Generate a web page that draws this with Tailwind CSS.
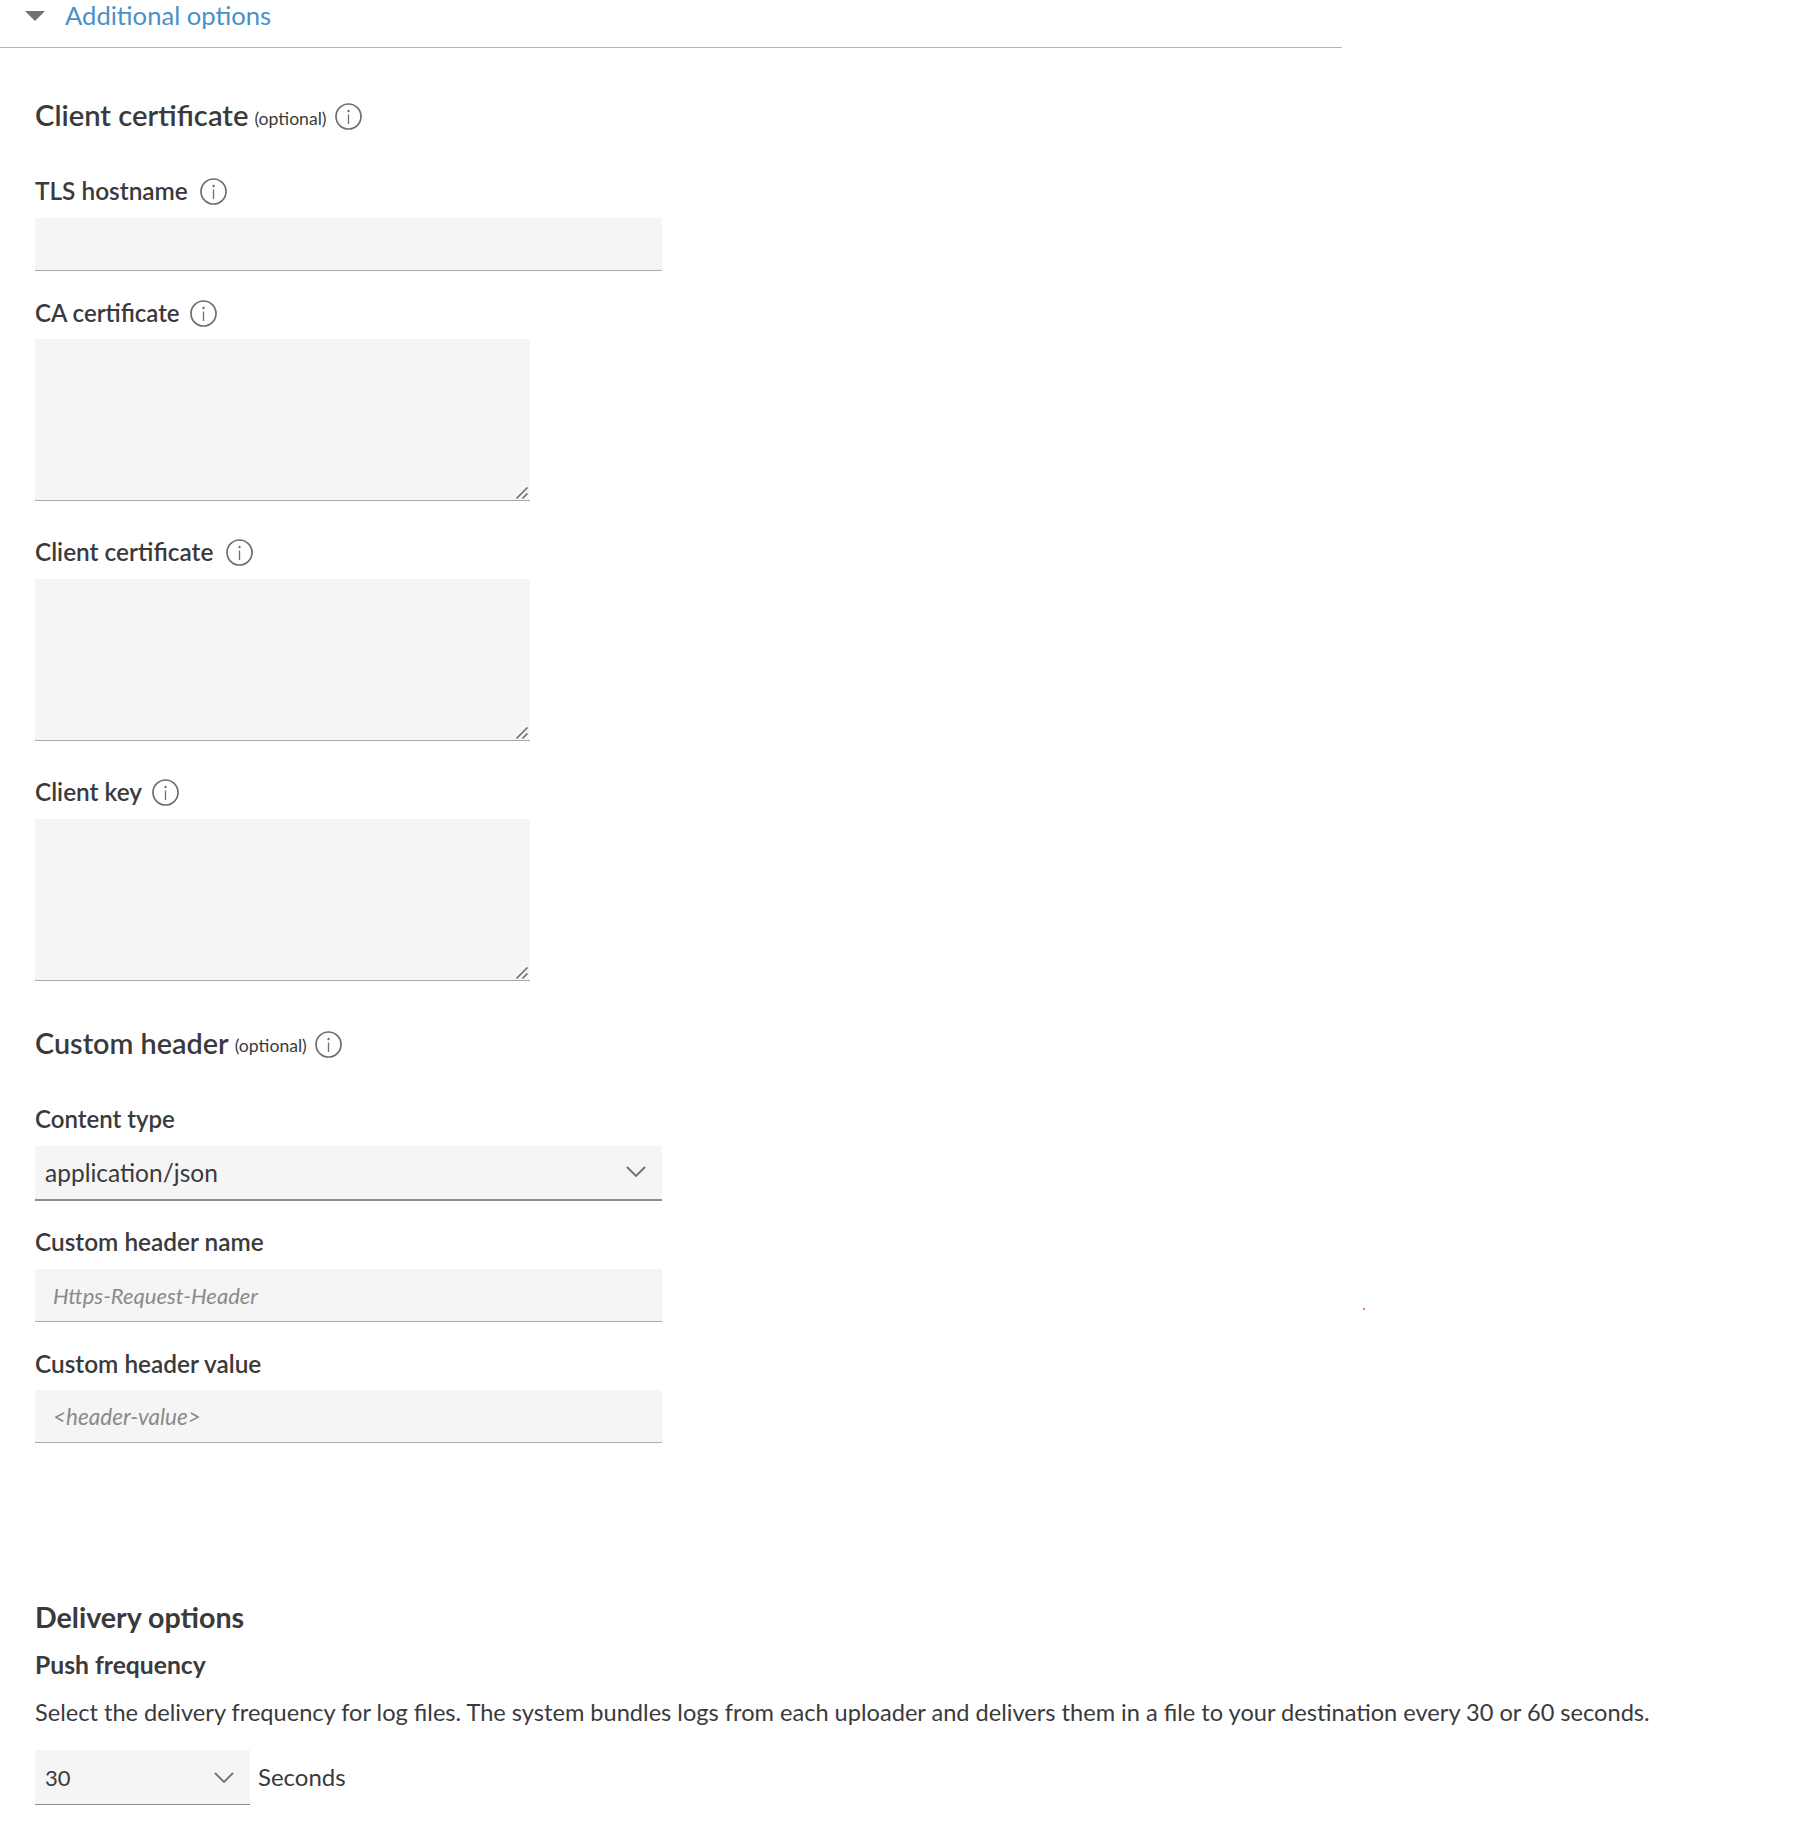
<!DOCTYPE html>
<html lang="en">
  <head>
    <meta charset="UTF-8" />
    <title>Additional options</title>
    <script src="https://cdn.jsdelivr.net/npm/@tailwindcss/browser@4"></script>
  </head>
  <body class="bg-white font-['Lato','Noto_Sans',sans-serif] text-[#3a3a3c]">
    <svg class="hidden">
      <symbol id="info" viewBox="0 0 27 27">
        <circle cx="13.5" cy="13.5" r="12.5" fill="none" stroke="#6f6f6f" stroke-width="1.7" />
        <circle cx="13.5" cy="8" r="1.2" fill="#6f6f6f" />
        <path d="M13.5 11.5V21" stroke="#6f6f6f" stroke-width="1.3" />
      </symbol>
      <symbol id="chev" viewBox="0 0 20 11">
        <path d="M1 1l9 9 9-9" fill="none" stroke="#6f6f6f" stroke-width="1.8" />
      </symbol>
      <symbol id="grip" viewBox="0 0 12 12">
        <path d="M0.5 11.5L11.5 0.5M6.5 11.5L11.5 6.5" fill="none" stroke="#666666" stroke-width="1.5" />
      </symbol>
    </svg>

    <main class="relative h-[1845px] w-[1801px] overflow-hidden">
      <!-- collapsible header -->
      <header class="flex h-[48px] w-[1342px] items-start border-b border-[#b5b5b5] pl-[25px]">
        <div class="mt-[11px] h-0 w-0 border-x-[10px] border-t-[10px] border-x-transparent border-t-[#707070]"></div>
        <h2 class="-mt-[1px] ml-[20px] h-[32px] text-[25.6px] leading-[32px] text-[#4a90c8]">Additional options</h2>
      </header>

      <div class="pl-[35px]">
        <!-- client certificate -->
        <div class="mt-[51px] flex h-[34px] items-center pb-[2px]">
          <h3 class="text-[29.2px] leading-[34px] font-semibold">Client certificate</h3>
          <span class="mt-[8px] ml-[6px] text-[17.6px]">(optional)</span>
          <svg class="mt-[3px] ml-[8px] h-[27px] w-[27px]"><use href="#info" /></svg>
        </div>

        <label class="mt-[46px] mb-[13px] flex h-[26px] items-center pb-[2px] text-[24.4px] font-semibold">
          TLS hostname
          <svg class="mt-[1px] ml-[12px] h-[27px] w-[27px]"><use href="#info" /></svg>
        </label>
        <input type="text" class="block h-[53px] w-[627px] border-b border-[#aaaaaa] bg-[#f5f5f5]" />

        <label class="mt-[30px] mb-[12px] flex h-[26px] items-center pb-[2px] text-[24px] font-semibold">
          CA certificate
          <svg class="ml-[10px] h-[27px] w-[27px]"><use href="#info" /></svg>
        </label>
        <div class="relative w-[495px]">
          <textarea class="block h-[162px] w-full resize-none border-b border-[#aaaaaa] bg-[#f5f5f5]"></textarea>
          <svg class="pointer-events-none absolute right-[2px] bottom-[2px] h-[12px] w-[12px]"><use href="#grip" /></svg>
        </div>

        <label class="mt-[39px] mb-[13px] flex h-[26px] items-center pb-[2px] text-[24.4px] font-semibold">
          Client certificate
          <svg class="mt-[1px] ml-[13px] h-[27px] w-[27px]"><use href="#info" /></svg>
        </label>
        <div class="relative w-[495px]">
          <textarea class="block h-[162px] w-full resize-none border-b border-[#aaaaaa] bg-[#f5f5f5]"></textarea>
          <svg class="pointer-events-none absolute right-[2px] bottom-[2px] h-[12px] w-[12px]"><use href="#grip" /></svg>
        </div>

        <label class="mt-[39px] mb-[13px] flex h-[26px] items-center pb-[2px] text-[24.4px] font-semibold">
          Client key
          <svg class="mt-[1px] ml-[10px] h-[27px] w-[27px]"><use href="#info" /></svg>
        </label>
        <div class="relative w-[495px]">
          <textarea class="block h-[162px] w-full resize-none border-b border-[#aaaaaa] bg-[#f5f5f5]"></textarea>
          <svg class="pointer-events-none absolute right-[2px] bottom-[2px] h-[12px] w-[12px]"><use href="#grip" /></svg>
        </div>

        <!-- custom header -->
        <div class="mt-[46px] flex h-[34px] items-center">
          <h3 class="-mt-[2px] text-[28.8px] leading-[34px] font-semibold">Custom header</h3>
          <span class="mt-[5px] ml-[6px] text-[17.6px]">(optional)</span>
          <svg class="ml-[8px] h-[27px] w-[27px]"><use href="#info" /></svg>
        </div>

        <label class="mt-[46px] mb-[13px] block h-[26px] text-[24px] leading-[24px] font-semibold">Content type</label>
        <div class="relative h-[55px] w-[627px] border-b-2 border-[#8c8c8c] bg-[#f5f5f5]">
          <select class="h-full w-full appearance-none pt-[2px] pl-[10px] text-[24.5px]">
            <option>application/json</option>
          </select>
          <svg class="pointer-events-none absolute top-[20px] right-[16px] h-[11px] w-[20px]"><use href="#chev" /></svg>
        </div>

        <label class="mt-[29px] mb-[13px] block h-[26px] text-[24.4px] leading-[24px] font-semibold">Custom header name</label>
        <input type="text" placeholder="Https-Request-Header" class="block h-[53px] w-[627px] border-b border-[#aaaaaa] bg-[#f5f5f5] pl-[18px] text-[22px] placeholder:text-[#8a8a8a] placeholder:italic" />

        <label class="mt-[30px] mb-[12px] block h-[26px] text-[24.4px] leading-[24px] font-semibold">Custom header value</label>
        <input type="text" placeholder="&lt;header-value&gt;" class="block h-[53px] w-[627px] border-b border-[#aaaaaa] bg-[#f5f5f5] pl-[18px] text-[22.5px] placeholder:text-[#8a8a8a] placeholder:italic" />

        <!-- delivery options -->
        <h3 class="mt-[157px] h-[34px] text-[28.6px] leading-[34px] font-bold">Delivery options</h3>
        <h4 class="mt-[17px] h-[28px] text-[24.7px] leading-[28px] font-bold">Push frequency</h4>
        <p class="mt-[19px] h-[28px] text-[23.6px] leading-[28px]">Select the delivery frequency for log files. The system bundles logs from each uploader and delivers them in a file to your destination every 30 or 60 seconds.</p>
        <div class="mt-[24px] flex items-center">
          <div class="relative h-[55px] w-[215px] border-b border-[#8c8c8c] bg-[#f5f5f5]">
            <select class="h-full w-full appearance-none pl-[10px] text-[22px]">
              <option>30</option>
            </select>
            <svg class="pointer-events-none absolute top-[22px] right-[16px] h-[11px] w-[20px]"><use href="#chev" /></svg>
          </div>
          <span class="-mt-[2px] ml-[8px] text-[24px]">Seconds</span>
        </div>
      </div>

      <!-- stray pixel in the capture -->
      <div class="absolute top-[1308px] left-[1363px] h-[2px] w-[2px] bg-[#f87171]"></div>
    </main>
  </body>
</html>
